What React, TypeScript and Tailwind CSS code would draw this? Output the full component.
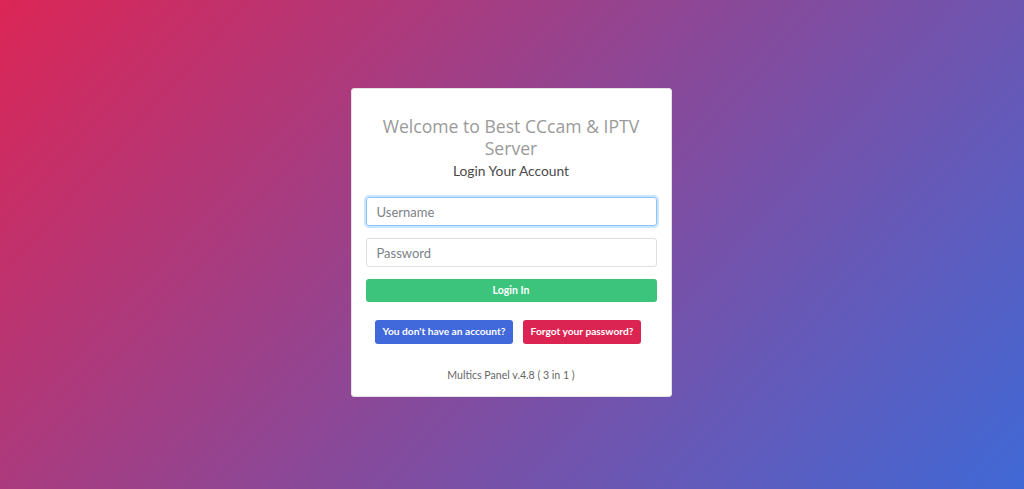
import { useState } from "react";

const App = () => {
  const [username, setUsername] = useState("");
  const [password, setPassword] = useState("");

  return (
    <div className="min-h-screen w-full flex items-center justify-center bg-[linear-gradient(132deg,#dc2656_0%,#8a4898_50%,#4069d6_100%)] font-['Lato',sans-serif]">
      <div className="w-[321px] mr-[2px] mb-[4px] bg-white border border-[#e3e3e3] rounded-[3px] px-[14px] pt-[27px] pb-[13px] flex flex-col">
        <h3 className="text-center font-['Open_Sans',sans-serif] text-[17.6px] leading-[21.5px] text-[#9a9a9a] px-[10px]">
          Welcome to Best CCcam &amp; IPTV Server
        </h3>
        <p className="text-center text-[13.8px] leading-[18px] text-[#4a4a4a] mt-[3px]">
          Login Your Account
        </p>
        <form className="flex flex-col mt-[17px]" onSubmit={(e) => e.preventDefault()}>
          <input
            type="text"
            placeholder="Username"
            value={username}
            onChange={(e) => setUsername(e.target.value)}
            className="h-[29px] w-full rounded-[3px] border border-[#8fc3ff] shadow-[0_0_0_2px_rgba(0,123,255,0.2)] px-[10px] text-[13px] text-[#495057] placeholder:text-[#7b8288] outline-none"
          />
          <input
            type="password"
            placeholder="Password"
            value={password}
            onChange={(e) => setPassword(e.target.value)}
            className="h-[29px] w-full rounded-[3px] border border-[#dcdfe3] px-[10px] text-[13px] text-[#495057] placeholder:text-[#7b8288] outline-none mt-[12px]"
          />
          <button
            type="submit"
            className="h-[23px] w-full rounded-[3px] bg-[#3cc47c] text-white text-[10.5px] font-bold mt-[12px]"
          >
            Login In
          </button>
        </form>
        <div className="flex justify-center gap-[10px] mt-[18px] pr-[6px]">
          <a className="h-[24px] w-[138px] flex items-center justify-center whitespace-nowrap rounded-[3px] bg-[#4169dc] text-white text-[10.2px] font-bold cursor-pointer">
            You don't have an account?
          </a>
          <a className="h-[24px] w-[118px] flex items-center justify-center whitespace-nowrap rounded-[3px] bg-[#dc2453] text-white text-[10.2px] font-bold cursor-pointer">
            Forgot your password?
          </a>
        </div>
        <p className="text-center text-[10.6px] leading-[16px] text-[#666] mt-[23px]">
          Multics Panel v.4.8 ( 3 in 1 )
        </p>
      </div>
    </div>
  );
};

export default App;
